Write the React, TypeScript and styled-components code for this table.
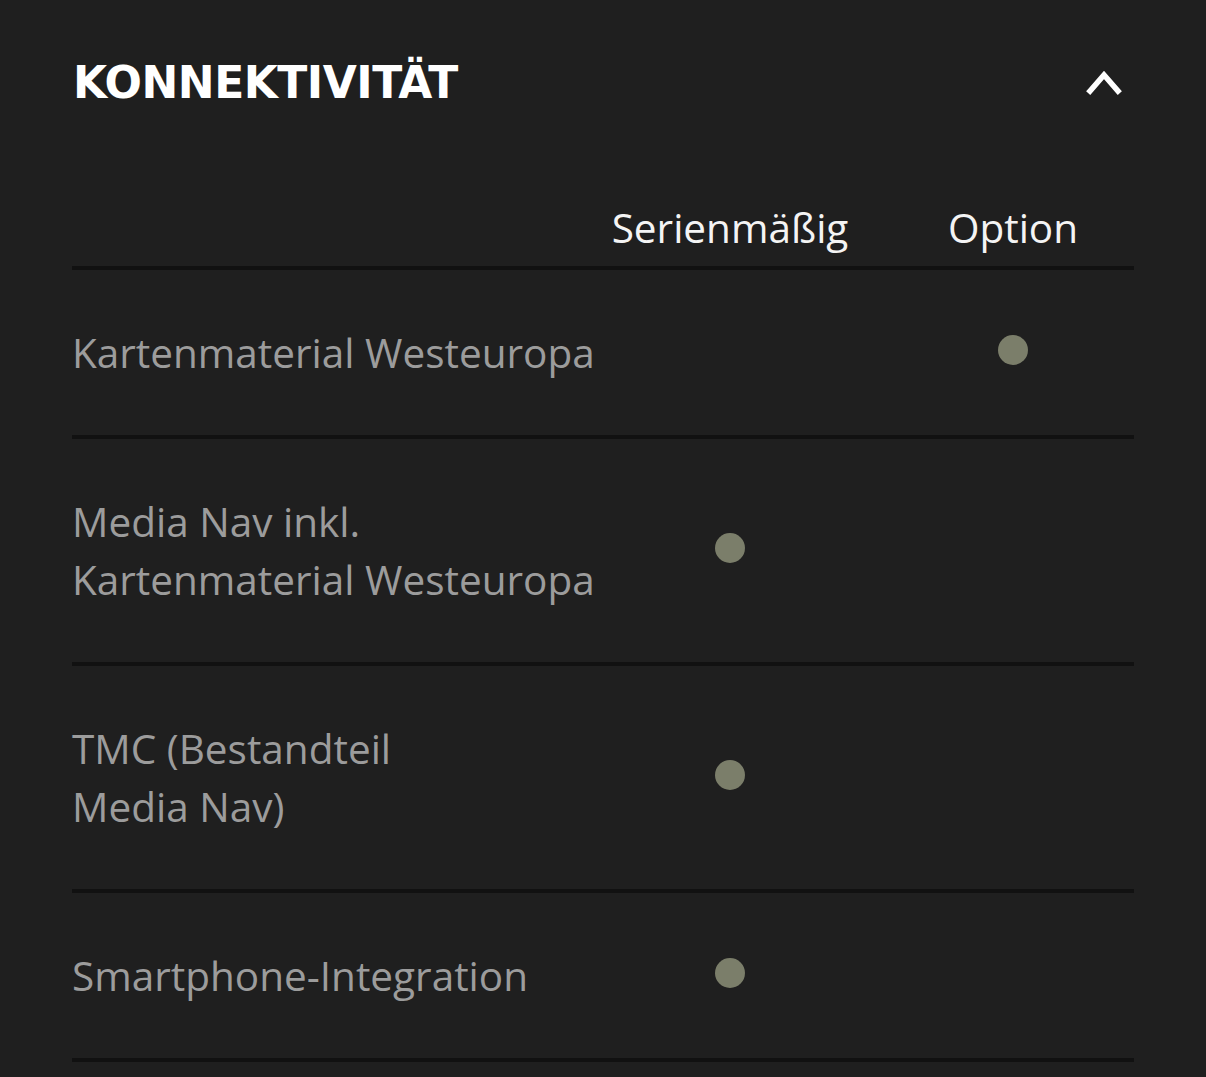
import React from "react";
import styled, { createGlobalStyle } from "styled-components";

const Global = createGlobalStyle`
  html, body { margin: 0; padding: 0; background: #1f1f1f; }
  body { font-family: "Open Sans", "Noto Sans", sans-serif; }
`;

const Section = styled.section`
  width: 1062px;
  padding: 0 72px;
  background: #1f1f1f;
`;

const TitleBar = styled.div`
  display: flex;
  align-items: center;
  justify-content: space-between;
  padding: 58px 12px 0 1px;
  height: 50px;
`;

const Title = styled.h2`
  margin: 0;
  font-family: "DejaVu Sans", sans-serif;
  font-weight: 700;
  font-size: 44px;
  line-height: 50px;
  letter-spacing: -0.5px;
  color: #ffffff;
`;

const Toggle = styled.button`
  border: 0;
  background: transparent;
  padding: 0;
  width: 36px;
  height: 28px;
  display: flex;
  align-items: center;
  justify-content: center;
  cursor: pointer;
`;

const Table = styled.div`
  display: grid;
  grid-template-columns: 530px 256px 1fr;
  margin-top: 94px;
`;

const HeadCell = styled.div<{ $shift?: boolean }>`
  font-size: 40.5px;
  line-height: 52px;
  color: #f4f4f4;
  text-align: center;
  white-space: nowrap;
  padding-bottom: 12px;
  padding-left: ${(p) => (p.$shift ? "34px" : "0")};
  border-bottom: 4px solid #111111;
`;

const Label = styled.div`
  font-size: 40.5px;
  line-height: 58px;
  color: #9c9c9c;
  white-space: nowrap;
  padding: 54px 0 53px 0;
  border-bottom: 4px solid #111111;
`;

const Mark = styled.div<{ $shift?: boolean }>`
  display: flex;
  align-items: center;
  justify-content: center;
  padding-left: ${(p) => (p.$shift ? "34px" : "0")};
  padding-bottom: 5px;
  border-bottom: 4px solid #111111;
`;

const Dot = styled.span`
  width: 30px;
  height: 30px;
  border-radius: 50%;
  background: #7b7e6a;
`;

type Row = { label: React.ReactNode; std: boolean; opt: boolean };

const rows: Row[] = [
  { label: "Kartenmaterial Westeuropa", std: false, opt: true },
  { label: <>Media Nav inkl.<br />Kartenmaterial Westeuropa</>, std: true, opt: false },
  { label: <>TMC (Bestandteil<br />Media Nav)</>, std: true, opt: false },
  { label: "Smartphone-Integration", std: true, opt: false },
];

export default function App() {
  return (
    <>
      <Global />
      <Section>
        <TitleBar>
          <Title>KONNEKTIVITÄT</Title>
          <Toggle aria-label="Einklappen">
            <svg width="36" height="26" viewBox="0 0 36 26">
              <polyline points="4,21 18,5 32,21" fill="none" stroke="#fff" strokeWidth="5.5" strokeLinecap="square" strokeLinejoin="miter" />
            </svg>
          </Toggle>
        </TitleBar>
        <Table>
          <HeadCell />
          <HeadCell>Serienmäßig</HeadCell>
          <HeadCell $shift>Option</HeadCell>
          {rows.map((r, i) => (
            <React.Fragment key={i}>
              <Label>{r.label}</Label>
              <Mark>{r.std && <Dot />}</Mark>
              <Mark $shift>{r.opt && <Dot />}</Mark>
            </React.Fragment>
          ))}
        </Table>
      </Section>
    </>
  );
}
